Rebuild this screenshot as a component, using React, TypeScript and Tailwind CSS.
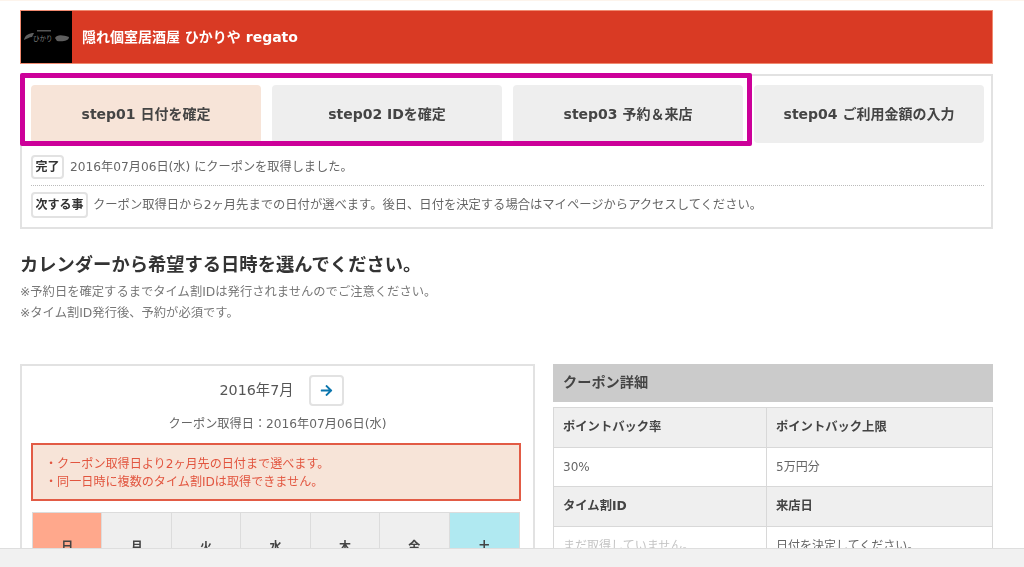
import { FaArrowRight } from "react-icons/fa";

const font = { fontFamily: '"DejaVu Sans", "Noto Sans CJK JP", sans-serif' };

function Tag({ children, tall }: { children: string; tall?: boolean }) {
  return (
    <span
      className={`flex shrink-0 items-center rounded-[4px] border-2 border-[#e2e2e2] bg-white px-[2.5px] text-[12px] font-bold text-[#333] ${
        tall ? "h-[26px]" : "h-[24px]"
      }`}
    >
      {children}
    </span>
  );
}

function Step({ label, active }: { label: string; active?: boolean }) {
  return (
    <div
      className={`flex h-[58px] w-[230px] shrink-0 items-center justify-center rounded-[4px] text-[14px] font-bold text-[#444] ${
        active ? "bg-[#f7e4d8]" : "bg-[#eeeeee]"
      }`}
    >
      {label}
    </div>
  );
}

function Th({ children }: { children: string }) {
  return (
    <div className="flex h-[39.5px] items-center border-r border-b border-[#d8d8d8] bg-[#efefef] px-[9px] text-[12.3px] font-bold text-[#444]">
      {children}
    </div>
  );
}

function Td({ children, muted }: { children: string; muted?: boolean }) {
  return (
    <div
      className={`flex h-[39.5px] items-center border-r border-b border-[#d8d8d8] bg-white px-[9px] text-[12px] ${
        muted ? "text-[#c4c4c4]" : "text-[#666]"
      }`}
    >
      {children}
    </div>
  );
}

const days = [
  { d: "日", c: "bg-[#ffa88c]" },
  { d: "月", c: "bg-[#efefef]" },
  { d: "火", c: "bg-[#efefef]" },
  { d: "水", c: "bg-[#efefef]" },
  { d: "木", c: "bg-[#efefef]" },
  { d: "金", c: "bg-[#efefef]" },
  { d: "土", c: "bg-[#b0e9f1]" },
];

export default function App() {
  return (
    <div style={font} className="relative h-[567px] w-[1024px] overflow-hidden bg-white text-[#555]">
      <div className="blur-[0.5px]">
        <div className="h-px bg-[#fdf4ec]" />
        <div className="ml-5 w-[973px] pt-[9px]">
          {/* shop header */}
          <header className="flex h-[54px] items-stretch border border-[#f08a70] bg-[#d93a24]">
            <div className="flex w-[51px] items-center justify-center bg-black">
              <svg width="49" height="18" viewBox="0 0 49 18">
                <rect x="15" y="2" width="14" height="1.5" fill="#555" />
                <path d="M2 12 C3 7 7 5 12 5 L10 9 C7 9 5 11 2 12Z" fill="#5e5e5e" />
                <text x="11" y="12.5" fontSize="6.5" fill="#7d7d7d" fontFamily="Noto Sans CJK JP">
                  ひかり
                </text>
                <path d="M33 10 C35 6 41 7 47 9 C47 13 40 14 35 13Z" fill="#5e5e5e" />
              </svg>
            </div>
            <div className="flex items-center pl-[10px] text-[14px] font-bold text-white">隠れ個室居酒屋 ひかりや regato</div>
          </header>

          {/* steps */}
          <section className="mt-[10px] h-[155px] border-2 border-[#e2e2e2] pt-[9px] pr-[7px] pl-[9px]">
            <div className="flex gap-[11px]">
              <Step label="step01 日付を確定" active />
              <Step label="step02 IDを確定" />
              <Step label="step03 予約＆来店" />
              <Step label="step04 ご利用金額の入力" />
            </div>
            <div className="flex h-[43px] items-center gap-[6px] border-b border-dotted border-[#bbb] pt-[5px] text-[12.2px] text-[#666]">
              <Tag>完了</Tag>
              <span className="mt-[2px]">2016年07月06日(水) にクーポンを取得しました。</span>
            </div>
            <div className="flex h-[38px] items-center gap-[5px] text-[12.3px] text-[#666]">
              <Tag tall>次する事</Tag>
              <span className="mt-[1px]">クーポン取得日から2ヶ月先までの日付が選べます。後日、日付を決定する場合はマイページからアクセスしてください。</span>
            </div>
          </section>

          {/* heading */}
          <h1 className="mt-[23px] text-[18.3px] leading-[26px] font-bold text-[#333]">カレンダーから希望する日時を選んでください。</h1>
          <p className="mt-[4px] text-[12.3px] leading-[21px] text-[#777]">※予約日を確定するまでタイム割IDは発行されませんのでご注意ください。</p>
          <p className="text-[12.3px] leading-[21px] text-[#777]">※タイム割ID発行後、予約が必須です。</p>

          {/* columns */}
          <div className="mt-[40px] flex gap-[18px]">
            <div className="h-[300px] w-[515px] border-2 border-[#e2e2e2] px-[9px]">
              <div className="mt-[9px] flex h-[31px] items-center justify-center gap-[15px] pl-[8px]">
                <span className="text-[14.3px] text-[#555]">2016年7月</span>
                <button className="flex h-[31px] w-[35px] items-center justify-center rounded-[4px] border-2 border-[#e2e2e2] bg-white">
                  <FaArrowRight size={13} color="#0a75ad" />
                </button>
              </div>
              <p className="mt-[8px] text-center text-[12.2px] leading-[20px] text-[#666]">クーポン取得日：2016年07月06日(水)</p>
              <div className="mt-[9px] h-[58px] w-[490px] border-2 border-[#e25b45] bg-[#f7e4d8] py-[10px] pl-[12px] text-[12.1px] leading-[18px] text-[#e2553f]">
                <p>・クーポン取得日より2ヶ月先の日付まで選べます。</p>
                <p>・同一日時に複数のタイム割IDは取得できません。</p>
              </div>
              <div className="mt-[11px] ml-px grid w-[488px] grid-cols-7 border border-[#dcdcdc]">
                {days.map((x) => (
                  <div
                    key={x.d}
                    className={`flex h-[68px] items-center justify-center border-r border-[#dcdcdc] text-[12px] font-bold text-[#444] last:border-r-0 ${x.c}`}
                  >
                    {x.d}
                  </div>
                ))}
              </div>
            </div>

            <div className="w-[440px]">
              <div className="flex h-[38px] items-center bg-[#cbcbcb] pl-[10px] text-[14.2px] font-bold text-[#444]">クーポン詳細</div>
              <div className="mt-[5px] grid grid-cols-[213px_226px] border-t border-l border-[#d8d8d8]">
                <Th>ポイントバック率</Th>
                <Th>ポイントバック上限</Th>
                <Td>30%</Td>
                <Td>5万円分</Td>
                <Th>タイム割ID</Th>
                <Th>来店日</Th>
                <Td muted>まだ取得していません。</Td>
                <Td>日付を決定してください。</Td>
              </div>
            </div>
          </div>
        </div>
      </div>

      {/* annotation frame */}
      <div className="absolute top-[73px] left-[20px] h-[73px] w-[732px] rounded-[2px] border-[5px] border-[#cc0099] blur-[0.35px]" />
      {/* bottom bar */}
      <div className="absolute right-0 bottom-0 left-0 h-[19px] border-t border-[#dedede] bg-[#f1f1f1]" />
    </div>
  );
}
